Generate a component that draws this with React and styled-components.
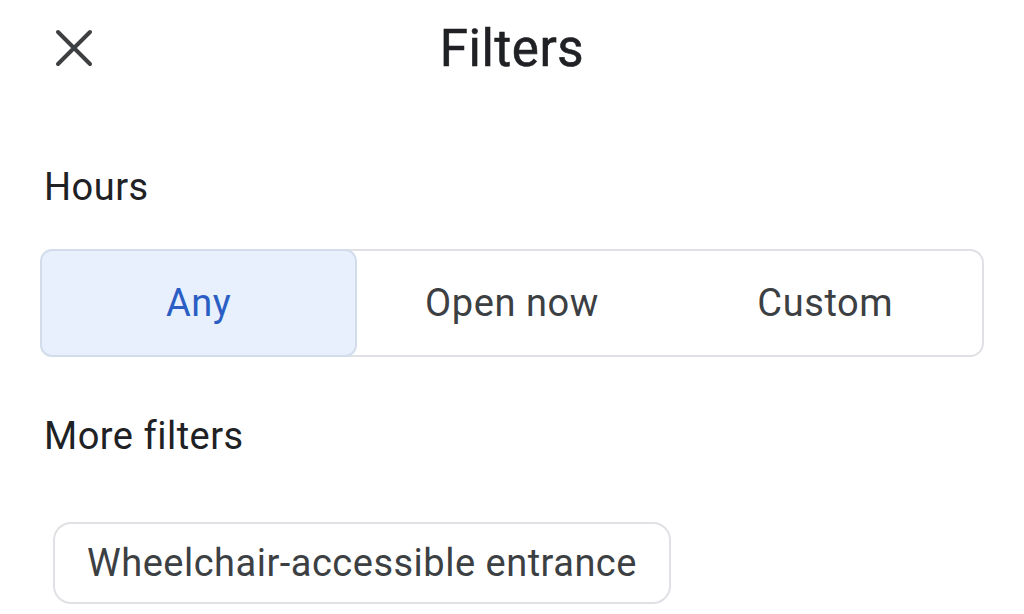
import styled, { createGlobalStyle } from "styled-components";

const GlobalStyle = createGlobalStyle`
  html, body {
    margin: 0;
    padding: 0;
    background: #ffffff;
  }
  body {
    font-family: Roboto, "Liberation Sans", Arial, sans-serif;
    color: #202124;
  }
`;

const Page = styled.div`
  width: 1024px;
  height: 614px;
  overflow: hidden;
  background: #fff;
`;

const Header = styled.header`
  height: 96px;
  display: grid;
  grid-template-columns: 1fr auto 1fr;
  align-items: center;
`;

const CloseButton = styled.button`
  justify-self: start;
  margin-left: 52px;
  width: 44px;
  height: 44px;
  padding: 0;
  border: none;
  background: none;
  display: flex;
  align-items: center;
  justify-content: center;
  color: #3c4043;
`;

const Title = styled.h1`
  margin: 0;
  font-size: 51px;
  font-weight: 400;
  line-height: 1;
  color: #202124;
  letter-spacing: 0.6px;
  -webkit-text-stroke: 0.6px #202124;
`;

const Content = styled.main`
  padding: 0 40px;
`;

const SectionLabel = styled.h2`
  margin: ${(p) => p.$top}px 0 0 4px;
  font-size: 38px;
  font-weight: 400;
  line-height: 44px;
  letter-spacing: 0.5px;
  color: #202124;
`;

const Segmented = styled.div`
  margin-top: 40px;
  height: 108px;
  box-sizing: border-box;
  border: 2px solid #dfe1e5;
  border-radius: 14px;
  display: grid;
  grid-template-columns: repeat(3, 1fr);
`;

const Segment = styled.button`
  margin: -2px;
  border: 2px solid ${(p) => (p.$active ? "#d3dceb" : "transparent")};
  border-radius: 12px;
  background: ${(p) => (p.$active ? "#e8f0fe" : "transparent")};
  color: ${(p) => (p.$active ? "#2a5ec4" : "#3c4043")};
  font-family: inherit;
  font-size: 38px;
  font-weight: 400;
  letter-spacing: 0.6px;
  display: flex;
  align-items: center;
  justify-content: center;
`;

const Chips = styled.div`
  margin-top: 64px;
  margin-left: 13px;
  display: flex;
  gap: 16px;
`;

const Chip = styled.button`
  height: 82px;
  padding: 0 32px;
  box-sizing: border-box;
  border: 2px solid #dfe1e5;
  border-radius: 18px;
  background: #fff;
  color: #3c4043;
  font-family: inherit;
  font-size: 38px;
  letter-spacing: 0.5px;
`;

function CloseIcon() {
  return (
    <svg width="38" height="38" viewBox="0 0 38 38" fill="none">
      <path
        d="M3 3L35 35M35 3L3 35"
        stroke="currentColor"
        strokeWidth="4"
        strokeLinecap="round"
      />
    </svg>
  );
}

const hours = ["Any", "Open now", "Custom"];

export default function App() {
  return (
    <Page>
      <GlobalStyle />
      <Header>
        <CloseButton aria-label="Close">
          <CloseIcon />
        </CloseButton>
        <Title>Filters</Title>
        <span />
      </Header>
      <Content>
        <SectionLabel $top={69}>Hours</SectionLabel>
        <Segmented>
          {hours.map((h, i) => (
            <Segment key={h} $active={i === 0}>
              {h}
            </Segment>
          ))}
        </Segmented>
        <SectionLabel $top={57}>More filters</SectionLabel>
        <Chips>
          <Chip>Wheelchair-accessible entrance</Chip>
        </Chips>
      </Content>
    </Page>
  );
}
